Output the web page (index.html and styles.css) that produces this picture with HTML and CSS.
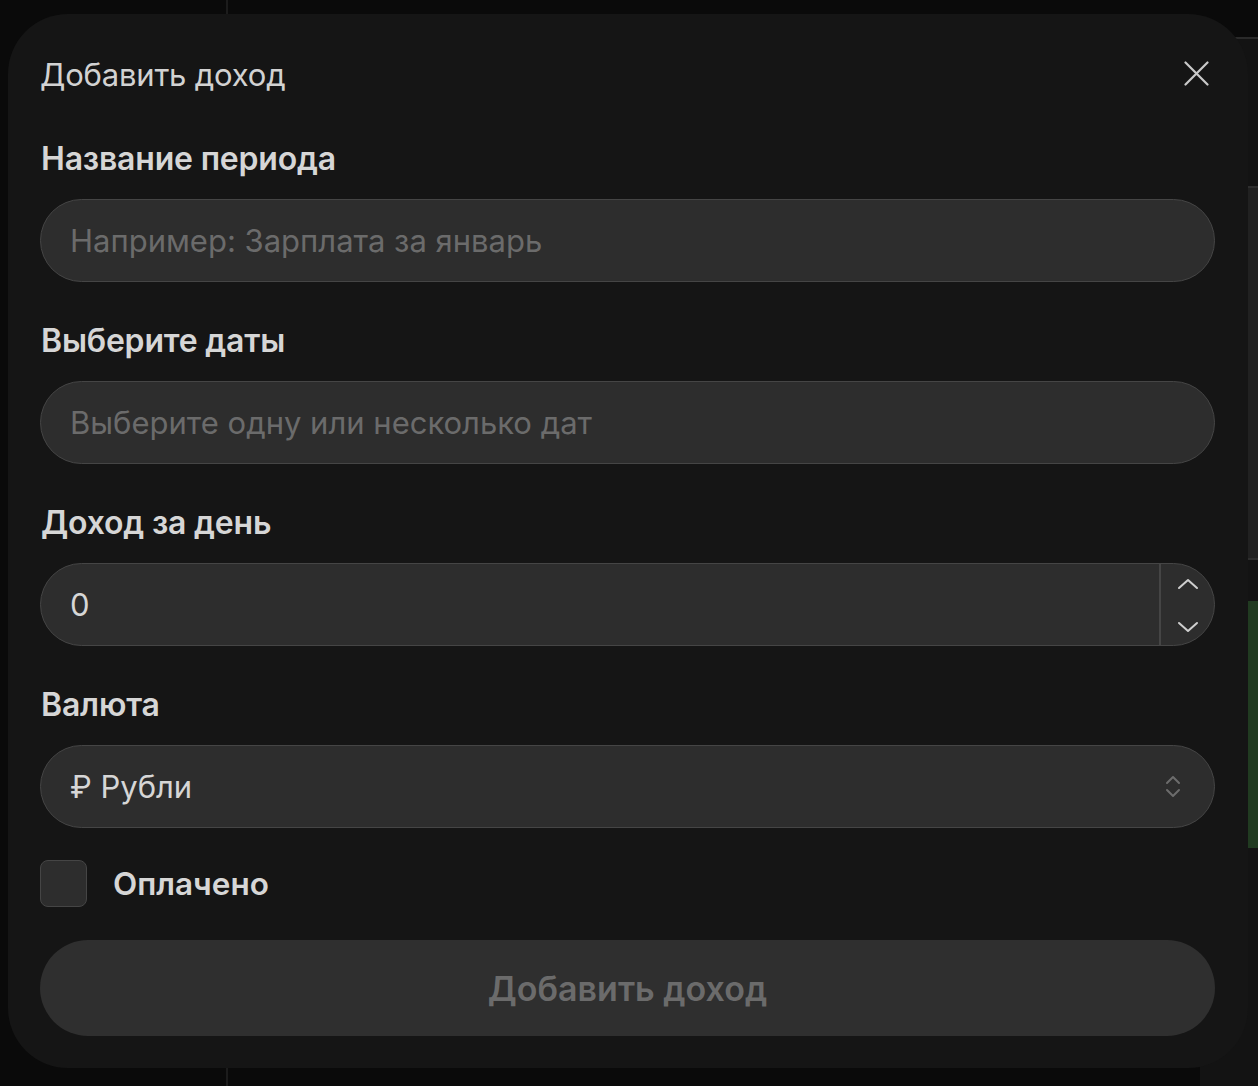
FILE: index.html
```html
<!DOCTYPE html>
<html lang="ru">
<head>
<meta charset="utf-8">
<title>Добавить доход</title>
<link rel="stylesheet" href="styles.css">
</head>
<body>
<div class="backdrop">
  <div class="bg-line"></div>
  <div class="bg-panel">
    <div class="bg-chip"></div>
    <div class="bg-green"></div>
  </div>
</div>
<div class="modal">
  <div class="modal-head">
    <h2 class="modal-title">Добавить доход</h2>
    <button class="close-btn" aria-label="Закрыть">
      <svg width="25" height="25" viewBox="0 0 25 25"><path d="M1.5 1.5 L23.5 23.5 M23.5 1.5 L1.5 23.5" stroke="#c9c9c9" stroke-width="2.2" stroke-linecap="round" fill="none"/></svg>
    </button>
  </div>
  <div class="field">
    <label class="label">Название периода</label>
    <div class="input"><span class="placeholder">Например: Зарплата за январь</span></div>
  </div>
  <div class="field">
    <label class="label">Выберите даты</label>
    <div class="input"><span class="placeholder">Выберите одну или несколько дат</span></div>
  </div>
  <div class="field">
    <label class="label">Доход за день</label>
    <div class="input input-number">
      <span class="value">0</span>
      <div class="spinner">
        <svg width="22" height="12" viewBox="0 0 22 12"><path d="M2 10 L11 2 L20 10" stroke="#cfcfcf" stroke-width="2" fill="none" stroke-linecap="round" stroke-linejoin="round"/></svg>
        <svg width="22" height="12" viewBox="0 0 22 12"><path d="M2 2 L11 10 L20 2" stroke="#cfcfcf" stroke-width="2" fill="none" stroke-linecap="round" stroke-linejoin="round"/></svg>
      </div>
    </div>
  </div>
  <div class="field">
    <label class="label">Валюта</label>
    <div class="input input-select">
      <span class="value">₽ Рубли</span>
      <svg class="select-icon" width="16" height="24" viewBox="0 0 16 24"><path d="M2 8 L8 2 L14 8 M2 15 L8 21 L14 15" stroke="#6c6c6c" stroke-width="2" fill="none" stroke-linecap="round" stroke-linejoin="round"/></svg>
    </div>
  </div>
  <div class="check-row">
    <span class="checkbox"></span>
    <span class="check-label">Оплачено</span>
  </div>
  <button class="submit">Добавить доход</button>
</div>
</body>
</html>
```
FILE: styles.css
```css
* { box-sizing: border-box; }
html, body { margin: 0; padding: 0; }
body {
  width: 1258px;
  height: 1086px;
  background: #0a0a0a;
  font-family: Inter, "Noto Sans", "DejaVu Sans", sans-serif;
  overflow: hidden;
  position: relative;
}
.backdrop { position: absolute; inset: 0; }
.bg-line {
  position: absolute; left: 226px; top: 0; width: 2px; height: 1086px; background: #1c1c1c;
}
.bg-panel {
  position: absolute; left: 1200px; top: 37px; width: 80px; height: 1100px;
  background: #131313; border-top: 2px solid #2a2a2a;
}
.bg-chip {
  position: absolute; left: 0; top: 147px; width: 80px; height: 374px;
  background: #212121; border-top: 2px solid #2e2e2e; border-bottom: 2px solid #2e2e2e;
}
.bg-green { position: absolute; left: 0; top: 562px; width: 80px; height: 247px; background: #213b21; }

.modal {
  position: absolute;
  left: 8px; top: 14px;
  width: 1240px; height: 1054px;
  background: #151515;
  border-radius: 60px;
  padding: 0 33px 0 32px;
  display: flex; flex-direction: column;
}
.modal-head {
  display: flex; align-items: flex-start; justify-content: space-between;
  height: 125px; padding-top: 41px;
}
.modal-title {
  margin: 0; font-size: 31px; line-height: 40px; font-weight: 400; color: #d2d2d2; letter-spacing: -0.2px;
}
.close-btn {
  background: none; border: 0; padding: 0; margin: 6px 6px 0 0; display: flex;
}
.field { display: flex; flex-direction: column; }
.field + .field { margin-top: 39px; }
.label {
  font-size: 32px; font-weight: 600; color: #d6d6d6; line-height: 40px; margin-bottom: 20px; padding-left: 1px;
  letter-spacing: -0.2px;
}
.input {
  height: 83px; border-radius: 42px; background: #2d2d2d; border: 1.5px solid #454545;
  display: flex; align-items: center; padding-left: 29px; font-size: 31px;
}
.placeholder { color: #6b6b6b; }
.value { color: #d6d6d6; }
.input-number { padding-right: 0; }
.input-number .value { flex: 1; }
.spinner {
  width: 55px; height: 100%; border-left: 2px solid #454545;
  display: flex; flex-direction: column; align-items: center; justify-content: space-between;
  padding: 14px 0 12px 0;
}
.input-select { justify-content: space-between; padding-right: 33px; }
.check-row { display: flex; align-items: center; gap: 26px; margin-top: 32px; }
.checkbox {
  width: 47px; height: 47px; border-radius: 8px; background: #2d2d2d; border: 1.5px solid #454545;
}
.check-label { font-size: 31.5px; font-weight: 600; color: #d6d6d6; }
.submit {
  margin-top: 33px; height: 96px; border-radius: 48px; border: 0; background: #2f2f2f;
  font-family: inherit; font-size: 34px; font-weight: 600; color: #6b6b6b;
}
```
